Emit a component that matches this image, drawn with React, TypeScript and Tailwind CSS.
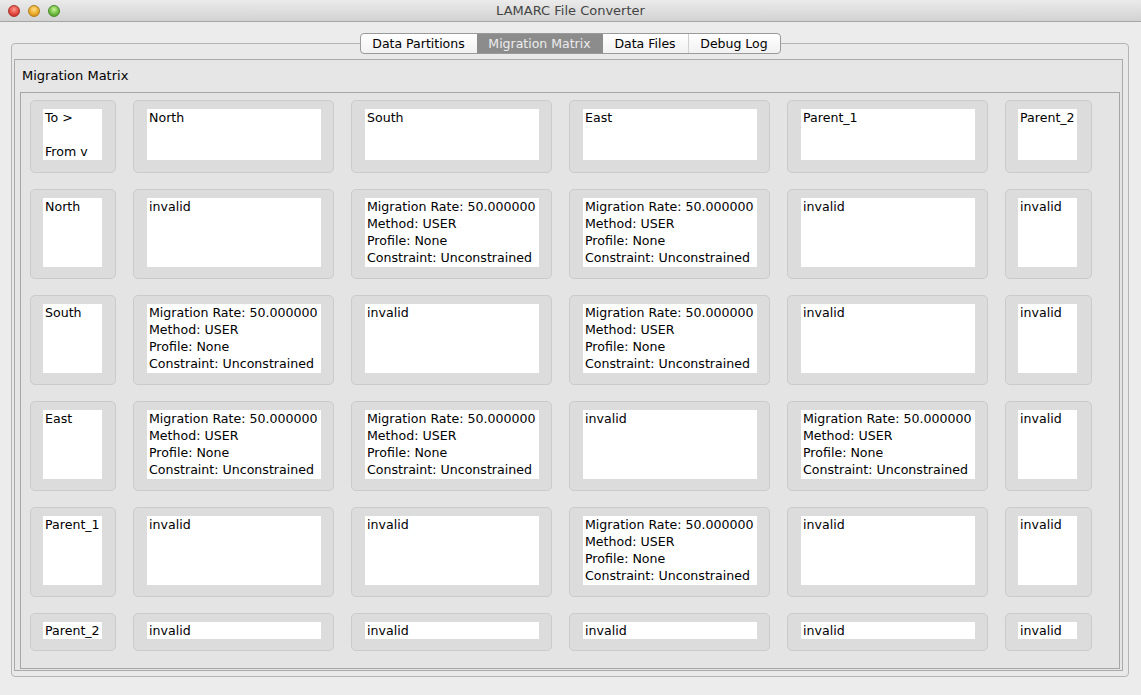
import React from 'react';

type Cell = { text: string[]; narrow?: boolean };

const rate = ['Migration Rate: 50.000000', 'Method: USER', 'Profile: None', 'Constraint: Unconstrained'];
const inv = ['invalid'];

const names = ['North', 'South', 'East', 'Parent_1', 'Parent_2'];

// rows[i][j] -> text in cell (from names[i] to names[j])
const matrix: string[][][] = [
    [inv, rate, rate, inv, inv],
    [rate, inv, rate, inv, inv],
    [rate, rate, inv, rate, inv],
    [inv, inv, rate, inv, inv],
    [inv, inv, inv, inv, inv],
];

const rowHeights = ['h-[73px]', 'h-[90px]', 'h-[90px]', 'h-[90px]', 'h-[90px]', 'h-[38px]'];
const boxHeights = ['h-[51px]', 'h-[69px]', 'h-[69px]', 'h-[69px]', 'h-[69px]', 'h-[17px]'];

const MatrixCell: React.FC<{ cell: Cell; row: number }> = ({ cell, row }) => (
    <div className={`${rowHeights[row]} rounded-[5px] border border-[#cbcbcb] bg-[#dcdcdc] pt-[8px] ${cell.narrow ? 'pl-[12px]' : 'pl-[13px]'}`}>
        <div className={`${boxHeights[row]} ${cell.narrow ? 'w-[59px]' : 'w-[174px]'} bg-white pl-[2px] text-[12.6px] leading-[17px] text-black whitespace-nowrap overflow-hidden`}>
            {cell.text.map((line, i) => (
                <div key={i}>{line || '\u00a0'}</div>
            ))}
        </div>
    </div>
);

const tabs = [
    { label: 'Data Partitions', w: 'w-[116px]' },
    { label: 'Migration Matrix', w: 'w-[126px]', active: true },
    { label: 'Data Files', w: 'w-[85px]' },
    { label: 'Debug Log', w: 'w-[92px]' },
];

export default function App() {
    const rows: Cell[][] = [
        [{ text: ['To >', '', 'From v'], narrow: true }, ...names.map((n, j) => ({ text: [n], narrow: j === 4 }))],
        ...names.map((n, i) => [
            { text: [n], narrow: true },
            ...matrix[i].map((t, j) => ({ text: t, narrow: j === 4 })),
        ]),
    ];

    return (
        <div className="w-[1141px] h-[695px] bg-[#ececec] overflow-hidden" style={{ fontFamily: '"DejaVu Sans", "Liberation Sans", sans-serif' }}>
            {/* title bar */}
            <div className="relative h-[22px] bg-gradient-to-b from-[#ebebeb] to-[#d2d2d2] border-b border-[#a5a5a5] flex items-center justify-center">
                <div className="absolute left-[8px] top-[5px] flex gap-[8px]">
                    <span className="w-[12px] h-[12px] rounded-full bg-[radial-gradient(circle_at_50%_35%,#ff9a90,#e0443a_60%,#b2241c)] border border-[#a8362e]" />
                    <span className="w-[12px] h-[12px] rounded-full bg-[radial-gradient(circle_at_50%_35%,#ffe08a,#e9a722_60%,#b67a10)] border border-[#b07e22]" />
                    <span className="w-[12px] h-[12px] rounded-full bg-[radial-gradient(circle_at_50%_35%,#c8f59a,#69b83a_60%,#3f8a1e)] border border-[#4c8a2c]" />
                </div>
                <span className="text-[13px] text-[#444]">LAMARC File Converter</span>
            </div>

            <div className="pl-[11px] pr-[12px] pt-[11px]">
                {/* tabs */}
                <div className="relative z-10 flex justify-center">
                    <div className="flex h-[21px] rounded-[4px] border border-[#9a9a9a] bg-gradient-to-b from-[#ffffff] to-[#f1f1f1] overflow-hidden text-[12.5px]">
                        {tabs.map((t, i) => (
                            <div
                                key={t.label}
                                className={`${t.w} flex items-center justify-center pt-[1px] ${t.active ? 'bg-[#8c8c8c] text-[#ececec]' : 'text-black'} ${i > 0 && !t.active && !tabs[i - 1].active ? 'border-l border-[#d0d0d0]' : ''}`}
                            >
                                {t.label}
                            </div>
                        ))}
                    </div>
                </div>

                {/* tab pane */}
                <div className="-mt-[11px] h-[634px] rounded-[4px] border border-[#b4b4b4] bg-[#e9e9e9] pt-[15px] pl-[2px] pr-[5px]">
                    <div className="h-[612px] border border-[#a9a9a9] bg-[#e6e6e6] pl-[5px] pr-[2px]">
                        <div className="h-[32px] pl-[2px] pt-[6px] text-[13px] text-black">Migration Matrix</div>
                        <div className="h-[577px] border border-[#a6a6a6] bg-[#e4e4e4] pl-[9px] pt-[7px]">
                            <div className="grid grid-cols-[86px_201px_201px_201px_201px_87px] gap-x-[17px] gap-y-[16px]">
                                {rows.map((r, ri) =>
                                    r.map((c, ci) => <MatrixCell key={`${ri}-${ci}`} cell={c} row={ri} />)
                                )}
                            </div>
                        </div>
                    </div>
                </div>
            </div>
        </div>
    );
}
